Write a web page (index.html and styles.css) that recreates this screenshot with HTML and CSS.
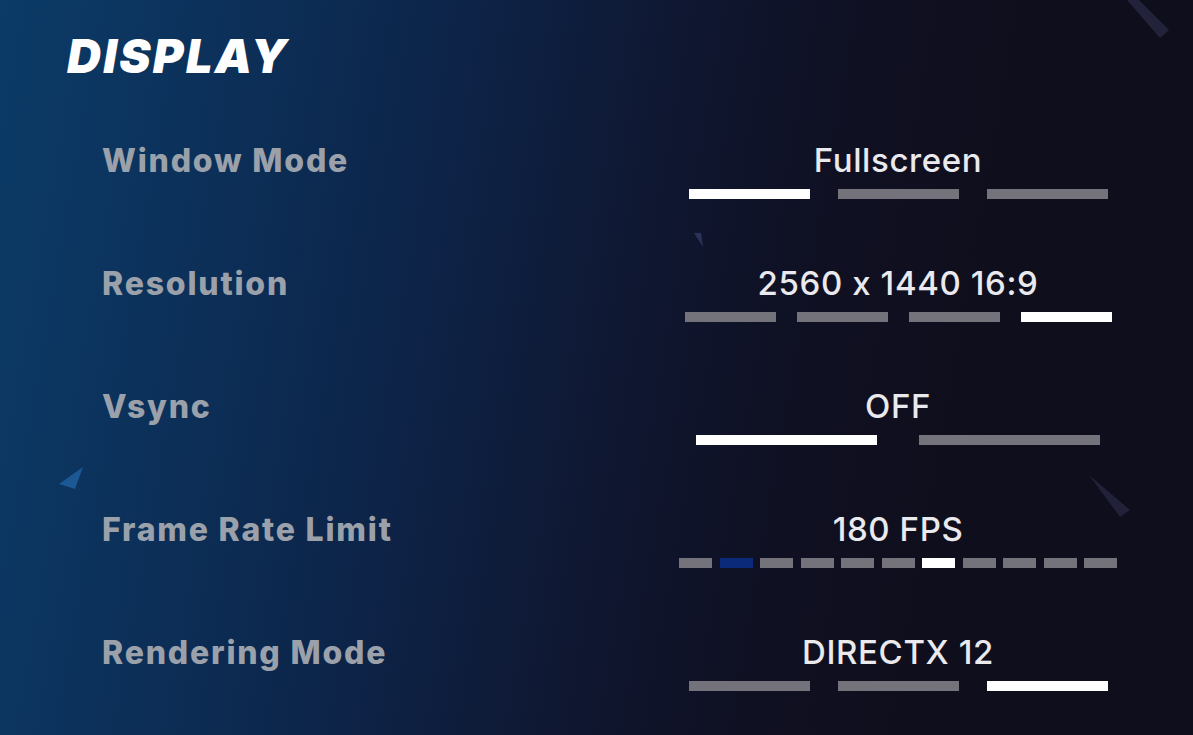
FILE: index.html
```html
<!DOCTYPE html>
<html lang="en">
<head>
    <meta charset="utf-8" />
    <meta name="viewport" content="width=device-width, initial-scale=1" />
    <title>Display Settings</title>
    <link rel="stylesheet" href="styles.css">
</head>
<body>
    <div class="screen">
        <svg class="shards" width="1193" height="735" viewBox="0 0 1193 735">
            <polygon points="1127,0 1139,0 1169,30 1160,38" fill="#22223b" />
            <polygon points="694,233 701,233 703,247" fill="#2a3357" />
            <polygon points="83,467 59,484 75,489" fill="#1c5894" />
            <polygon points="1089,475 1130,510 1120,517" fill="#21213a" />
        </svg>

        <h1 class="title">DISPLAY</h1>

        <div class="settings">
            <div class="row">
                <div class="label">Window Mode</div>
                <div class="control">
                    <div class="value">Fullscreen</div>
                    <div class="bars bars-3">
                        <span class="bar on"></span>
                        <span class="bar"></span>
                        <span class="bar"></span>
                    </div>
                </div>
            </div>

            <div class="row">
                <div class="label">Resolution</div>
                <div class="control">
                    <div class="value">2560 x 1440 16:9</div>
                    <div class="bars bars-4">
                        <span class="bar"></span>
                        <span class="bar"></span>
                        <span class="bar"></span>
                        <span class="bar on"></span>
                    </div>
                </div>
            </div>

            <div class="row">
                <div class="label">Vsync</div>
                <div class="control">
                    <div class="value">OFF</div>
                    <div class="bars bars-2">
                        <span class="bar on"></span>
                        <span class="bar"></span>
                    </div>
                </div>
            </div>

            <div class="row">
                <div class="label">Frame Rate Limit</div>
                <div class="control">
                    <div class="value">180 FPS</div>
                    <div class="bars bars-11">
                        <span class="bar"></span>
                        <span class="bar hover"></span>
                        <span class="bar"></span>
                        <span class="bar"></span>
                        <span class="bar"></span>
                        <span class="bar"></span>
                        <span class="bar on"></span>
                        <span class="bar"></span>
                        <span class="bar"></span>
                        <span class="bar"></span>
                        <span class="bar"></span>
                    </div>
                </div>
            </div>

            <div class="row">
                <div class="label">Rendering Mode</div>
                <div class="control">
                    <div class="value">DIRECTX 12</div>
                    <div class="bars bars-3">
                        <span class="bar"></span>
                        <span class="bar"></span>
                        <span class="bar on"></span>
                    </div>
                </div>
            </div>
        </div>
    </div>
</body>
</html>
```

FILE: styles.css
```css
html, body {
    margin: 0;
    height: 100%;
}

body {
    font-family: Inter, "Noto Sans", sans-serif;
    font-feature-settings: "calt" 0;
    background: #0f0e1c;
    overflow: hidden;
}

.screen {
    position: relative;
    width: 1193px;
    height: 735px;
    box-sizing: border-box;
    padding: 32px 75px 0 67px;
    background: linear-gradient(100deg, #0b3b67 0%, #0c3059 18%, #0d2347 36%, #0f1731 52%, #0f1022 66%, #0f0e1c 80%);
}

.shards {
    position: absolute;
    top: 0;
    left: 0;
    pointer-events: none;
}

.title {
    margin: 0;
    font-size: 47px;
    line-height: 47px;
    font-weight: 900;
    font-style: italic;
    letter-spacing: 2.3px;
    color: #fff;
}

.settings {
    margin-top: 61px;
    padding-left: 35px;
}

.row {
    display: grid;
    grid-template-columns: 1fr 440px;
    align-items: start;
    height: 123px;
}

.label {
    padding-top: 1px;
    font-size: 32px;
    line-height: 40px;
    font-weight: 800;
    letter-spacing: 1.8px;
    color: #9ba1aa;
}

.control {
    display: flex;
    flex-direction: column;
    align-items: center;
}

.value {
    font-size: 33px;
    line-height: 40px;
    font-weight: 500;
    letter-spacing: 0.6px;
    color: #e9e9ee;
}

.bars {
    display: flex;
    justify-content: center;
    margin-top: 9px;
}

.bar {
    height: 10px;
    background-color: #74737b;
}

.bar.on {
    background-color: #fff;
}

.bar.hover {
    background-color: #0b2a79;
}

.bars-2 { gap: 42px; }
.bars-2 .bar { width: 181px; }

.bars-3 { gap: 28px; }
.bars-3 .bar { width: 121px; }

.bars-4 { gap: 21px; }
.bars-4 .bar { width: 91px; }

.bars-11 { gap: 7.5px; }
.bars-11 .bar { width: 33px; }
```
